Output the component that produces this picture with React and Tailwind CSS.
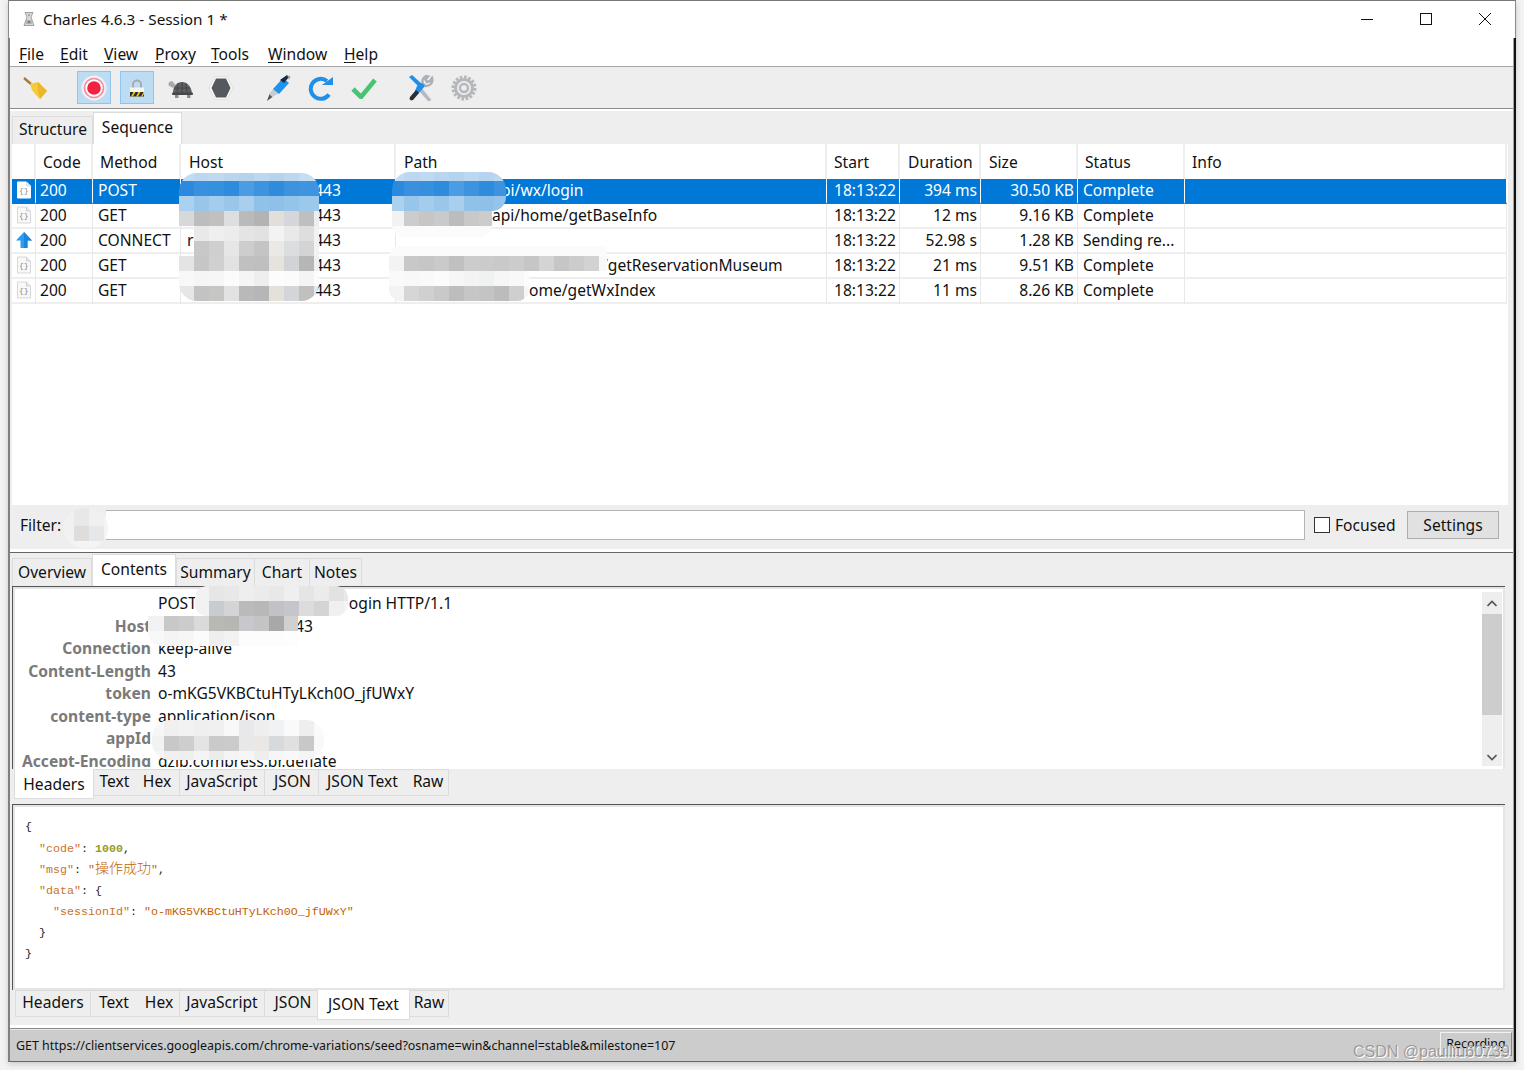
import React from "react";

const ui = "font-['Noto_Sans','Noto_Sans_CJK_SC',sans-serif]";

function U({ c, r, className = "" }) {
  return <span className={className}><span className="underline underline-offset-2">{c}</span>{r}</span>;
}

function Mosaic({ className, rows, heights, cellW = 15, firstW = 15 }) {
  return (
    <div className={"absolute overflow-hidden " + className}>
      {rows.map((row, i) => (
        <div key={i} className="flex">
          {row.map((col, j) => (
            <div key={j} className="shrink-0" style={{ width: j === 0 ? firstW : cellW, height: heights[i], backgroundColor: col }} />
          ))}
        </div>
      ))}
    </div>
  );
}

const Doc = ({ selected }) => (
  <svg width="16" height="18" viewBox="0 0 16 18" className="block">
    <path d="M1.5 1h9l4 4v12h-13z" fill={selected ? "#fff" : "#f8f8f8"} stroke={selected ? "#fff" : "#d8d8d8"} />
    <path d="M10.5 1v4h4" fill="#e8e8e8" stroke={selected ? "#ddd" : "#d0d0d0"} />
    <text x="7.8" y="12" fontSize="8" textAnchor="middle" fill="#8a8a8a" fontFamily="'Liberation Mono',monospace">{"{}"}</text>
  </svg>
);

const UpArrow = () => (
  <svg width="18" height="18" viewBox="0 0 18 18" className="block">
    <path d="M9 1 L17 9.5 H12.5 V17 H5.5 V9.5 H1 Z" fill="#2f9bee" />
    <path d="M9 1 L17 9.5 H12.5 V17 H9 Z" fill="#1b85dc" />
  </svg>
);

const tableRows = [
  { icon: "doc", code: "200", method: "POST", path: "pi/wx/login", pathClass: "pl-[105px]", dur: "394 ms", size: "30.50 KB", status: "Complete", selected: true },
  { icon: "doc", code: "200", method: "GET", path: "api/home/getBaseInfo", pathClass: "pl-[96px]", dur: "12 ms", size: "9.16 KB", status: "Complete" },
  { icon: "up", code: "200", method: "CONNECT", path: "", pathClass: "pl-[8px]", dur: "52.98 s", size: "1.28 KB", status: "Sending re...", hostMark: true },
  { icon: "doc", code: "200", method: "GET", path: "/getReservationMuseum", pathClass: "pl-[206px]", dur: "21 ms", size: "9.51 KB", status: "Complete" },
  { icon: "doc", code: "200", method: "GET", path: "ome/getWxIndex", pathClass: "pl-[133px]", dur: "11 ms", size: "8.26 KB", status: "Complete" },
];

const gridCols = "grid grid-cols-[24px_57px_88px_215px_431px_73px_81px_97px_107px_322px]";

function HeaderCell({ children, className = "" }) {
  return <div className={"h-[35px] border-r-2 border-[#eeeeee] flex items-center " + className}>{children}</div>;
}

function Row({ r }) {
  const base = r.selected ? "bg-[#0078d7] text-white" : "bg-white text-[#111]";
  const cell = "h-[25px] flex items-center pb-[1px] whitespace-nowrap overflow-hidden border-r-[1px] border-b-2 " + (r.selected ? "border-r-white border-b-[#0078d7] " : "border-r-[#e8e8e8] border-b-[#eeeeee] ") + base + " ";
  return (
    <div className={gridCols + " h-[25px]"}>
      <div className={cell + "justify-center"}>{r.icon === "doc" ? <Doc selected={r.selected} /> : <UpArrow />}</div>
      <div className={cell + "pl-[4px]"}>{r.code}</div>
      <div className={cell + "pl-[5px]"}>{r.method}</div>
      <div className={cell + "pl-[6px] relative"}>
        {r.hostMark && <span>r</span>}
        <span className="absolute left-[129px]">:443</span>
      </div>
      <div className={cell + r.pathClass}>{r.path}</div>
      <div className={cell + "pl-[7px]"}>18:13:22</div>
      <div className={cell + "justify-end pr-[3px]"}>{r.dur}</div>
      <div className={cell + "justify-end pr-[3px]"}>{r.size}</div>
      <div className={cell + "pl-[5px]"}>{r.status}</div>
      <div className={cell} />
    </div>
  );
}

function TopTab({ label, w, active, sep = true, ip = "pb-[1px]" }) {
  return active ? (
    <div className={"h-[32px] bg-white border border-b-0 border-[#dcdcdc] flex items-start justify-center pt-[3px] text-[#111] " + w}>{label}</div>
  ) : (
    <div className={"h-[28px] bg-[#eeeeee] border-t border-[#dcdcdc] flex items-center justify-center text-[#111] " + ip + " " + (sep ? "border-x " : "") + w}>{label}</div>
  );
}

function InnerTab({ label, w, active, sep = true, ap = "pb-0" }) {
  return active ? (
    <div className={"h-[30px] bg-white border-x border-b border-[#dcdcdc] flex items-center justify-center text-[#111] " + ap + " " + w}>{label}</div>
  ) : (
    <div className={"h-[27px] bg-[#eeeeee] border-y border-[#dcdcdc] flex items-center justify-center pb-[4px] text-[#111] " + (sep ? "border-r " : "") + w}>{label}</div>
  );
}

const kv = [
  ["", <span>POST<span className="inline-block w-[152px]" />ogin HTTP/1.1</span>],
  ["Host", <span><span className="inline-block w-[137px]" />43</span>],
  ["Connection", "keep-alive"],
  ["Content-Length", "43"],
  ["token", "o-mKG5VKBCtuHTyLKch0O_jfUWxY"],
  ["content-type", "application/json"],
  ["appId", ""],
  ["Accept-Encoding", "gzip,compress,br,deflate"],
];

const K = ({ children }) => <span className="text-[#c8722c]">{children}</span>;
const S = ({ children }) => <span className="text-[#c46200]">{children}</span>;
const P = ({ children }) => <span className="text-[#222]">{children}</span>;
const CJK = ({ children }) => <span className="font-['Noto_Sans_CJK_SC'] text-[14px] leading-[14px] font-light">{children}</span>;

export default function App() {
  const g1 = ["#d8d8d8", "#bdbdbd", "#c0c0be", "#dedede", "#bababa", "#b2b3b2", "#e2dfda", "#d4d6db", "#bfbfbf", "#ededed"];
  const g2 = ["transparent", "#e9e9e9", "#efefef", "#ececec", "#e4e4e4", "#e2e2e2", "#f3f3f3", "#e9e9e9", "#dedede", "#f2f2f2"];
  const g3 = ["transparent", "#c8c8c8", "#cfcfcf", "#e6e6e6", "#cdcdcd", "#c4c4c4", "#ebe9e6", "#dcdddf", "#d4d4d4", "#f2f2f2"];
  const g4 = ["#e4e4e4", "#c6c6c6", "#d0d0d0", "#e2e2e2", "#c0c0c0", "#bfbfbf", "#e6e3df", "#d1d3d6", "#b6b6b6", "#f0f0f0"];
  const g5 = ["#f8f8f8", "#f5f5f5", "#f6f6f6", "#fbfbfb", "#f5f5f5", "#eeeeee", "#fcfcfc", "#fbfbfb", "#f4f4f4", "#fcfcfc"];
  const g6 = ["#e6e6e6", "#c3c3c3", "#c6c6c4", "#e2e2e2", "#b9b9b9", "#b6b6b6", "#e4e1db", "#d4d5d9", "#c0c0c0", "#e8e8e8"];
  const blue0 = ["#c3dcf1", "#bcd7ef", "#bfd9f0", "#bad6ef", "#b6d3ee", "#bcd8f0", "#b6d4ee", "#bcd8f0", "#c6def2", "#dbeaf6"];
  const blue1 = ["#2c8ade", "#3a8fde", "#3590de", "#2f8cdc", "#4b9ce2", "#3e93de", "#2f8bdc", "#3e93de", "#3f94df", "#3f94df"];
  const blue2 = ["#acd0ef", "#98c5ea", "#a4cced", "#9ac6ea", "#a8cfee", "#90c1e8", "#8fc0e8", "#95c4ea", "#9cc8ec", "#9cc8ec"];
  const r4 = ["#f4f3f3", "#c8c8c8", "#c6c6c6", "#cacaca", "#c0c0c0", "#cccccc", "#cbcbcb", "#c9c9c9", "#cccccc", "#c6c6c6", "#d4d4d4", "#c6c6c6", "#cccccc", "#d2d2d2", "#f8f8f8"];
  const w15 = Array(15).fill("#fbfbfb");
  const r5a = ["#fafafa", "#f8f8f8", "#f9f9f9", "#fbfbfb", "#f6f6f6", "#f3f3f3", "#f0f1f1", "#f6f6f6", "#f8f8f8", "#fcfcfc"];
  const r5b = ["#f3f3f3", "#d6d6d6", "#d0d0d0", "#c9c9c9", "#bdbdbd", "#c6c6c6", "#c4c4c4", "#bcbcbc", "#cfcfcf", "#f5f5f5"];
  const p1 = ["#f2f2f2", "#e6e6e6", "#e8e8e8", "#eeeeee", "#ebebeb", "#e8e8e8", "#efefef", "#e5e5e5", "#ebebeb", "#e2e2e2", "#e8e8e8", "#f0f0f0"];
  const p2 = ["#f2f2f2", "#c8ccd0", "#d2d4d6", "#bababa", "#b8b8b8", "#c0c2c8", "#c4c6cc", "#dcdcdc", "#d4d4d4", "#f0f0f0", "#f4f4f4", "#f8f8f8"];
  const q1 = ["#f2f2f2", "#c8c8c8", "#cccccc", "#dadada", "#b8b8b4", "#b6b6b2", "#c6c8cc", "#c4c4c4", "#a8a8a8", "#d0d0d0", "#f2f2f2"];
  const q2 = ["#f8f8f8", "#f4f4f4", "#f6f6f6", "#fbfbfb", "#eeeeee", "#f2f2f2", "#fcfcfc", "#fcfcfc", "#fcfcfc", "#fdfdfd", "#fdfdfd"];
  const a1 = ["#f6f6f6", "#f0f0f0", "#f2f2f2", "#efefef", "#f0f0f0", "#f8f8f8", "#e8e8ea", "#eeeeee", "#f0f2f4", "#fafafa", "#eeeeee", "#fafafa"];
  const a2 = ["#f2f2f2", "#c8c8c8", "#cecece", "#e4e4e4", "#cacaca", "#cbcbcb", "#e8e8e8", "#ebe7e4", "#d6dadc", "#e0e0e0", "#c8c8c8", "#f8f8fa"];
  const a3 = ["#f6f6f6", "#f0f0f0", "#efefef", "#f4f4f4", "#ececec", "#f4f4f4", "#f6f6f6", "#eeeeee", "#f6f6f6", "#f8f8f8", "#f4f4f4", "#fafafa"];

  return (
    <div className={"relative w-[1524px] h-[1070px] overflow-hidden bg-[#f3f3f3] text-[15.6px] leading-[22px] text-[#111] " + ui}>
      <div className="ml-[8px] w-[1508px] h-[1062px] flex flex-col shadow-[0_2px_6px_rgba(0,0,0,0.18)]">
        {/* Title bar */}
        <div className="h-[38px] bg-white border-t border-[#777] border-l border-r border-l-[#8a8a8a] border-r-[#8a8a8a] flex items-center pb-[2px] shrink-0">
          <svg width="14" height="16" viewBox="0 0 14 16" className="ml-[13px]">
            <path d="M3 1.500h8L9 6l3 8.500H2L5 6z" fill="#d8d8d8" stroke="#8f8f8f" strokeWidth="0.8" />
            <rect x="4" y="9" width="6" height="4" fill="#b4b4b4" />
            <circle cx="7" cy="4" r="1" fill="#a8a070" />
            <circle cx="7" cy="11" r="1.200" fill="#7b7b7b" />
          </svg>
          <span className="ml-[7px] text-[15.300px] text-[#111]">Charles 4.6.3 - Session 1 *</span>
          <div className="ml-auto flex items-center">
            <svg width="14" height="14" viewBox="0 0 14 14" className="mr-[45px]"><path d="M1 7.500h12" stroke="#111" strokeWidth="1" /></svg>
            <svg width="14" height="14" viewBox="0 0 14 14" className="mr-[45px]"><rect x="1.500" y="1.500" width="11" height="11" fill="none" stroke="#111" strokeWidth="1" /></svg>
            <svg width="14" height="14" viewBox="0 0 14 14" className="mr-[23px]"><path d="M1 1l12 12M13 1L1 13" stroke="#111" strokeWidth="1" /></svg>
          </div>
        </div>

        {/* Body */}
        <div className="flex-1 min-h-0 flex flex-col border-l-2 border-l-[#808080] border-r-2 border-r-[#111] bg-[#eeeeee] border-b border-b-[#666]">
          <div className="flex-1 min-h-0 flex flex-col border-r border-r-[#a0a0a0]">
            {/* Menu */}
            <div className="h-[29px] bg-white border-b border-[#a6a6a6] flex items-center pl-[9px] shrink-0 pt-[3px]">
              <U c="F" r="ile" className="w-[41px]" />
              <U c="E" r="dit" className="w-[44px]" />
              <U c="V" r="iew" className="w-[51px]" />
              <U c="P" r="roxy" className="w-[56px]" />
              <U c="T" r="ools" className="w-[57px]" />
              <U c="W" r="indow" className="w-[76px]" />
              <U c="H" r="elp" />
            </div>

            {/* Toolbar */}
            <div className="h-[42px] bg-[#eeeeee] border-b border-[#8c8c8c] flex items-center pl-[9px] shrink-0">
              <div className="w-[34px] h-[34px] flex items-center justify-center">
                <svg width="28" height="28" viewBox="0 0 28 28">
                  <path d="M2 4l7 6" stroke="#a87a3a" strokeWidth="2.400" />
                  <path d="M8 10l8-2 9 9-7 8-4-4-4-5z" fill="#f5c93a" />
                  <path d="M16 8l9 9-7 8-2-8z" fill="#ecb62a" />
                </svg>
              </div>
              <div className="ml-[24px] w-[34px] h-[33px] bg-[#bcdcf4] border border-[#8fc4ee] flex items-center justify-center">
                <svg width="26" height="26" viewBox="0 0 26 26">
                  <circle cx="13" cy="13" r="12.500" fill="#f5eef0" />
                  <circle cx="13" cy="13" r="9.500" fill="#fff" stroke="#f08a9e" strokeWidth="1.600" />
                  <circle cx="13" cy="13" r="6.800" fill="#f0223f" />
                </svg>
              </div>
              <div className="ml-[9px] w-[34px] h-[33px] bg-[#bcdcf4] border border-[#8fc4ee] flex items-center justify-center">
                <svg width="16" height="18" viewBox="0 0 16 18">
                  <path d="M4 9V5.500a4 4 0 0 1 8 0V9" fill="none" stroke="#a8a8a8" strokeWidth="1.800" />
                  <rect x="1" y="8.500" width="14" height="4.500" fill="#f8f6ea" />
                  <rect x="1" y="13" width="14" height="4.500" fill="#2a2a2a" />
                  <path d="M2 17.500l2.500-4.500h2L4 17.500zM7 17.500l2.500-4.500h2L9 17.500zM12 17.500l2.500-4.500h.5v2l-1.500 2.500z" fill="#f0c820" />
                </svg>
              </div>
              <div className="ml-[9px] w-[34px] h-[34px] flex items-center justify-center">
                <svg width="26" height="22" viewBox="0 0 26 22">
                  <path d="M1.500 7c0-3 4-3.500 5-1.500L8.500 8 6 11 3.500 9.500C2 9.500 1.500 8.500 1.500 7z" fill="#a4aaaf" />
                  <path d="M6 16c0-7 4-11 9-11s9 4 10 11z" fill="#5d5f60" />
                  <path d="M11 6l-1 10M19 6l1 10M7 11h16M15 5v11" stroke="#3f4142" strokeWidth="0.800" />
                  <rect x="5" y="15.500" width="21" height="2.500" rx="1" fill="#46484a" />
                  <rect x="8" y="18" width="3.500" height="3" fill="#8a8e92" />
                  <rect x="20" y="18" width="3.500" height="3" fill="#8a8e92" />
                </svg>
              </div>
              <div className="ml-[7px] w-[34px] h-[34px] flex items-center justify-center">
                <svg width="26" height="26" viewBox="0 0 26 26">
                  <path d="M7 1.500h12L25 13l-6 11.500H7L1 13z" fill="#f8f8f8" stroke="#e0e0e0" />
                  <path d="M8 3.500h10L22.500 13 18 22.500H8L3.500 13z" fill="#55585e" />
                </svg>
              </div>
              <div className="ml-[24px] w-[34px] h-[34px] flex items-center justify-center">
                <svg width="26" height="28" viewBox="0 0 26 28">
                  <path d="M1 27l2.500-7 3 3z" fill="#555" />
                  <path d="M3 20L8 14l5 5-6.500 4z" fill="#c8ccd2" />
                  <path d="M7 15L17 4l6 5-10 11z" fill="#1f94ee" />
                  <path d="M14 6l7-5 2 2-5 6z" fill="#1d2a38" />
                  <path d="M21 1l3.500 1.500L23 6z" fill="#9aa0a6" />
                </svg>
              </div>
              <div className="ml-[8px] w-[34px] h-[34px] flex items-center justify-center">
                <svg width="26" height="26" viewBox="0 0 26 26">
                  <path d="M21 19.500A10 10 0 1 1 19 6" fill="none" stroke="#1f8fe8" strokeWidth="4" />
                  <path d="M14 10h11V2z" fill="#1f8fe8" />
                </svg>
              </div>
              <div className="ml-[9px] w-[34px] h-[34px] flex items-center justify-center">
                <svg width="26" height="22" viewBox="0 0 26 22">
                  <path d="M2 12l8 8L24 3" fill="none" stroke="#47c472" strokeWidth="4.600" />
                </svg>
              </div>
              <div className="ml-[23px] w-[34px] h-[34px] flex items-center justify-center">
                <svg width="26" height="28" viewBox="0 0 26 28">
                  <path d="M13 13l8 10 2.500 3-3 1.500L10 16z" fill="#b4bac2" />
                  <path d="M15 10a6 6 0 0 1 3-8l2 .5-2.500 3 1.500 2.500 3-1L24 4a6 6 0 0 1-6 8z" fill="none" stroke="#aab0b8" strokeWidth="2.400" />
                  <path d="M1 3l3-2 10 9-3 3z" fill="#1f8fe8" />
                  <path d="M9 12l5-3 3 3-7 8-3-3z" fill="#1f8fe8" />
                  <path d="M8 16l3 3-6 7-2 .5-1.500-1.500.5-2z" fill="#2b2f33" />
                </svg>
              </div>
              <div className="ml-[9px] w-[34px] h-[34px] flex items-center justify-center">
                <svg width="26" height="26" viewBox="0 0 26 26">
                  <circle cx="13" cy="13" r="10.500" fill="none" stroke="#b4b8bc" strokeWidth="4" strokeDasharray="2.500 1.600" />
                  <circle cx="13" cy="13" r="8.500" fill="none" stroke="#b4b8bc" strokeWidth="3" />
                  <circle cx="13" cy="13" r="4" fill="none" stroke="#b4b8bc" strokeWidth="2.400" />
                </svg>
              </div>
            </div>
            <div className="h-[2px] bg-white shrink-0" />

            {/* Upper tabs */}
            <div className="h-[33px] flex items-end pl-[2px] shrink-0">
              <TopTab label="Structure" w="w-[81px] pl-[1px]" ip="pb-[3px]" />
              <TopTab label="Sequence" w="w-[89px]" active />
            </div>

            {/* Sequence table */}
            <div className="h-[361px] ml-[2px] w-[1496px] bg-white shrink-0">
              <div className={gridCols}>
                <HeaderCell />
                <HeaderCell className="pl-[7px]">Code</HeaderCell>
                <HeaderCell className="pl-[7px]">Method</HeaderCell>
                <HeaderCell className="pl-[8px]">Host</HeaderCell>
                <HeaderCell className="pl-[8px]">Path</HeaderCell>
                <HeaderCell className="pl-[7px]">Start</HeaderCell>
                <HeaderCell className="pl-[8px]">Duration</HeaderCell>
                <HeaderCell className="pl-[8px]">Size</HeaderCell>
                <HeaderCell className="pl-[7px]">Status</HeaderCell>
                <HeaderCell className="pl-[7px]">Info</HeaderCell>
              </div>
              <div className="flex flex-col">
                {tableRows.map((r, i) => <Row key={i} r={r} />)}
              </div>
            </div>

            {/* Filter */}
            <div className="h-[44px] flex items-center pl-[10px] pb-[5px] shrink-0 mr-[3px]">
              <span className="w-[46px]">Filter:</span>
              <div className="ml-[40px] w-[1199px] h-[30px] bg-white border border-[#b4b4b4] border-l-0" />
              <div className="ml-[9px] w-[16px] h-[16px] bg-white border border-[#333]" />
              <span className="ml-[5px] w-[61px]">Focused</span>
              <div className="ml-[11px] w-[92px] h-[28px] bg-[#e1e1e1] border border-[#adadad] flex items-center justify-center">Settings</div>
            </div>
            <div className="h-[3px] bg-white shrink-0" />
            <div className="h-[1px] bg-[#666] shrink-0" />

            {/* Lower tabs */}
            <div className="h-[33px] flex items-end pl-[2px] shrink-0">
              <TopTab label="Overview" w="w-[80px]" />
              <TopTab label="Contents" w="w-[84px]" active />
              <TopTab label="Summary" w="w-[79px]" />
              <TopTab label="Chart" w="w-[54px]" sep={false} />
              <TopTab label="Notes" w="w-[53px]" />
            </div>

            {/* Header pane */}
            <div className="h-[183px] ml-[2px] mr-[8px] border-l border-t border-[#555] bg-white shrink-0 relative overflow-hidden">
              <div className="absolute inset-0 border-2 border-[#e4e4e4] border-b-0 pointer-events-none" />
              <div className="pt-[5px] h-[180px] overflow-hidden">
                {kv.map(([k, v], i) => (
                  <div key={i} className="flex h-[22.500px] leading-[22.500px]">
                    <div className="w-[138px] text-right font-bold text-[#7a7a7a] shrink-0">{k}</div>
                    <div className="ml-[7px] whitespace-nowrap">{v}</div>
                  </div>
                ))}
              </div>
              {/* scrollbar */}
              <div className="absolute right-[3px] top-[5px] w-[20px] h-[174px] bg-[#eeeeee] flex flex-col">
                <div className="h-[22px] flex items-center justify-center">
                  <svg width="10" height="7" viewBox="0 0 10 7"><path d="M0.500 6L5 1.500 9.500 6" fill="none" stroke="#555" strokeWidth="1.600" /></svg>
                </div>
                <div className="h-[101px] bg-[#cdcdcd]" />
                <div className="flex-1 flex items-end justify-center pb-[5px]">
                  <svg width="10" height="7" viewBox="0 0 10 7"><path d="M0.500 1L5 5.500 9.500 1" fill="none" stroke="#555" strokeWidth="1.600" /></svg>
                </div>
              </div>
            </div>

            {/* Inner tabs 1 */}
            <div className="h-[30px] flex items-start pl-[4px] shrink-0">
              <InnerTab label="Headers" w="w-[80px]" active />
              <InnerTab label="Text" w="w-[41px]" sep={false} />
              <InnerTab label="Hex" w="w-[45px]" />
              <InnerTab label="JavaScript" w="w-[85px]" />
              <InnerTab label="JSON" w="w-[54px] pl-[2px]" />
              <InnerTab label="JSON Text" w="w-[87px]" sep={false} />
              <InnerTab label="Raw" w="w-[43px] pl-[2px]" />
            </div>
            <div className="h-[5px] shrink-0" />

            {/* JSON pane */}
            <div className="h-[186px] ml-[2px] mr-[8px] border-l border-t border-[#555] bg-white shrink-0">
              <div className="h-full border-2 border-[#e4e4e4] pl-[10px] pt-[10px] font-['Liberation_Mono',monospace] text-[11.670px] leading-[21px] text-[#222] whitespace-pre">
                <div className="h-[22px]"><P>{"{"}</P></div>
                <div className="h-[21px]">{"  "}<K>"code"</K><P>: </P><span className="text-[#9a9a1e] font-bold">1000</span><P>,</P></div>
                <div className="h-[21px]">{"  "}<K>"msg"</K><P>: </P><S>"<CJK>操作成功</CJK>"</S><P>,</P></div>
                <div className="h-[21px]">{"  "}<K>"data"</K><P>: {"{"}</P></div>
                <div className="h-[21px]">{"    "}<K>"sessionId"</K><P>: </P><S>"o-mKG5VKBCtuHTyLKch0O_jfUWxY"</S></div>
                <div className="h-[21px]"><P>{"  }"}</P></div>
                <div className="h-[21px]"><P>{"}"}</P></div>
              </div>
            </div>

            {/* Inner tabs 2 */}
            <div className="h-[30px] flex items-start pl-[5px] shrink-0">
              <InnerTab label="Headers" w="w-[76px] border-l" />
              <InnerTab label="Text" w="w-[46px]" sep={false} />
              <InnerTab label="Hex" w="w-[43px] pl-[2px]" />
              <InnerTab label="JavaScript" w="w-[85px]" />
              <InnerTab label="JSON" w="w-[52px] pl-[4px]" sep={false} />
              <InnerTab label="JSON Text" w="w-[93px]" ap="pb-[2px]" active />
              <InnerTab label="Raw" w="w-[39px]" />
            </div>

            <div className="h-[5px] shrink-0" />
            <div className="h-[3px] bg-white shrink-0" />
            <div className="h-[1px] bg-[#8a8a8a] shrink-0" />
            <div className="flex-1 min-h-0 bg-[#cccccc] border-t border-[#e8e8e8] flex items-center pl-[6px] text-[12.450px] relative">
              <span>GET https://clientservices.googleapis.com/chrome-variations/seed?osname=win&amp;channel=stable&amp;milestone=107</span>
              <div className="absolute right-[1px] top-[2px] w-[72px] h-[24px] border border-[#f2f2f2] border-r-[#888] border-b-[#888] flex items-center justify-center text-[12.450px]">Recording</div>
            </div>
          </div>
        </div>
      </div>

      {/* Privacy mosaics over the text */}
      <Mosaic className="left-[179px] top-[173px] w-[140px] h-[128px] rounded-[18px]" rows={[blue0, blue1, blue2, g1, g2, g3, g4, g5, g6]} heights={[8, 15, 15, 15, 15, 15, 15, 15, 15]} />
      <Mosaic className="left-[392px] top-[172px] w-[114px] h-[39px] rounded-t-[18px] rounded-br-[14px]" firstW={12} rows={[blue0, blue1, blue2]} heights={[9, 15, 15]} />
      <Mosaic className="left-[392px] top-[211px] w-[100px] h-[26px] rounded-b-[12px]" firstW={12} rows={[["#f2f2f2", "#cccccc", "#c6c6c6", "#cacaca", "#bcbcbc", "#c8c8c8", "#cccccc", "#d0d0d0"], Array(8).fill("#fbfbfb")]} heights={[15, 11]} />
      <Mosaic className="left-[389px] top-[246px] w-[218px] h-[25px] rounded-t-[10px] rounded-r-[4px]" rows={[w15, r4]} heights={[10, 15]} />
      <Mosaic className="left-[389px] top-[271px] w-[140px] h-[30px] rounded-b-[12px]" rows={[r5a, r5b]} heights={[15, 15]} />
      <Mosaic className="left-[64px] top-[508px] w-[44px] h-[40px] rounded-[20px]" firstW={10} rows={[["#f1f1f1", "#e8e8e8", "#f0f0f0", "#f4f4f4"], ["#f1f1f1", "#dedddb", "#e6e7e9", "#f4f4f4"], ["#f4f4f4", "#f4f4f4", "#f4f4f4", "#f4f4f4"]]} heights={[18, 15, 7]} />
      <Mosaic className="left-[195px] top-[586px] w-[153px] h-[30px] rounded-[12px]" firstW={14} rows={[p1, p2]} heights={[15, 15]} />
      <Mosaic className="left-[148px] top-[616px] w-[150px] h-[30px] rounded-bl-[14px]" firstW={16} rows={[q1, q2]} heights={[15, 15]} />
      <Mosaic className="left-[152px] top-[720px] w-[172px] h-[40px] rounded-[18px]" firstW={12} rows={[a1, a2, a3]} heights={[16, 15, 9]} />

      <div className="absolute left-[1353px] top-[1040px] font-['Liberation_Sans',sans-serif] text-[16px] leading-[24px] text-[#9c9c9c] [text-shadow:1px_1px_0_#ffffff] whitespace-nowrap">CSDN @paulliu60739</div>
    </div>
  );
}
